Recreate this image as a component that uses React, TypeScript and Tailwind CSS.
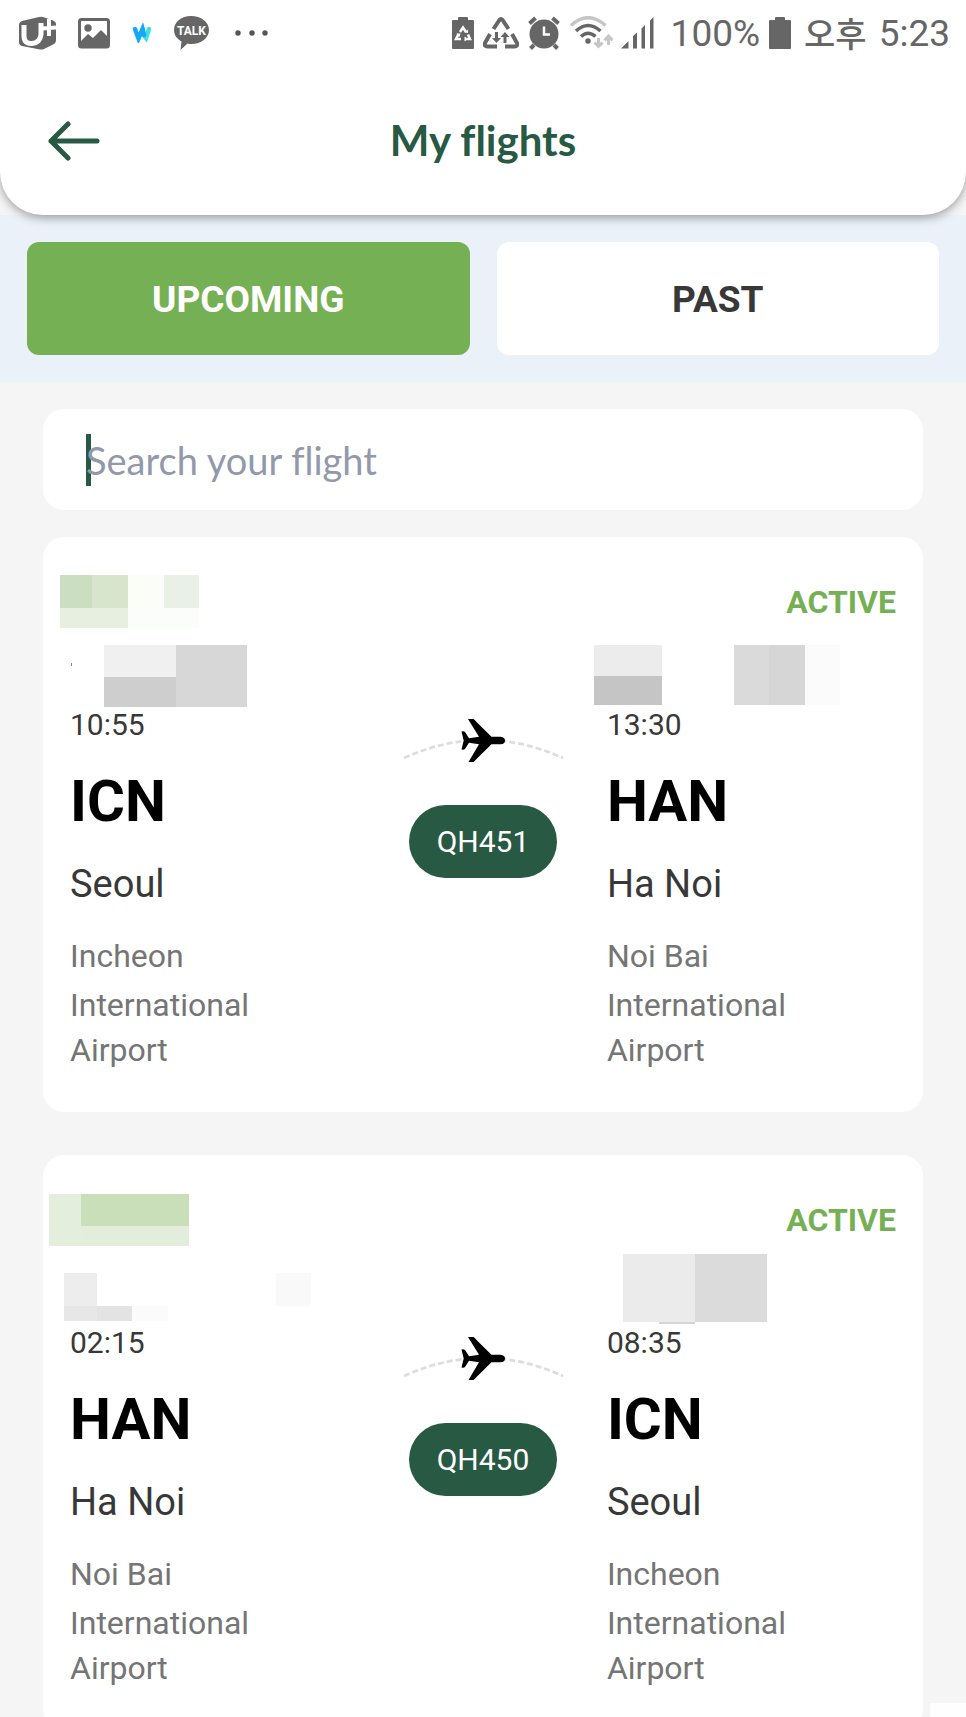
import { useState } from 'react'

type Block = { x: number; y: number; w: number; h: number; fill: string }

type Stop = {
  time: string
  code: string
  city: string
  airport: string
  date: Block[]
}

type Flight = {
  number: string
  status: string
  reference: Block[]
  from: Stop
  to: Stop
}

const FLIGHTS: Flight[] = [
  {
    number: 'QH451',
    status: 'ACTIVE',
    reference: [
      { x: -10, y: -8, w: 32, h: 33, fill: '#cbdfc0' },
      { x: 22, y: -8, w: 36, h: 33, fill: '#d7e5cd' },
      { x: 58, y: -8, w: 36, h: 33, fill: '#fafdf8' },
      { x: 94, y: -8, w: 35, h: 33, fill: '#e9f1e6' },
      { x: -10, y: 25, w: 68, h: 20, fill: '#e6efe0' },
      { x: 58, y: 25, w: 71, h: 20, fill: '#fbfdfa' },
    ],
    from: {
      time: '10:55',
      code: 'ICN',
      city: 'Seoul',
      airport: 'Incheon International Airport',
      date: [
        { x: 1, y: 40, w: 1, h: 3, fill: '#808080' },
        { x: 34, y: 22, w: 72, h: 32, fill: '#f0f0f0' },
        { x: 34, y: 54, w: 72, h: 30, fill: '#cecece' },
        { x: 106, y: 22, w: 71, h: 62, fill: '#d7d7d7' },
      ],
    },
    to: {
      time: '13:30',
      code: 'HAN',
      city: 'Ha Noi',
      airport: 'Noi Bai International Airport',
      date: [
        { x: -13, y: 22, w: 68, h: 31, fill: '#ececec' },
        { x: -13, y: 53, w: 68, h: 29, fill: '#c5c5c5' },
        { x: 127, y: 22, w: 35, h: 60, fill: '#dadada' },
        { x: 162, y: 22, w: 36, h: 60, fill: '#d6d6d6' },
        { x: 198, y: 22, w: 35, h: 60, fill: '#fbfbfb' },
      ],
    },
  },
  {
    number: 'QH450',
    status: 'ACTIVE',
    reference: [
      { x: -21, y: -7, w: 32, h: 52, fill: '#e3eedd' },
      { x: 11, y: -7, w: 108, h: 32, fill: '#c8dfba' },
      { x: 11, y: 25, w: 108, h: 20, fill: '#e2eddb' },
    ],
    from: {
      time: '02:15',
      code: 'HAN',
      city: 'Ha Noi',
      airport: 'Noi Bai International Airport',
      date: [
        { x: -6, y: 32, w: 33, h: 33, fill: '#ededed' },
        { x: -6, y: 65, w: 33, h: 15, fill: '#e7e7e7' },
        { x: 27, y: 65, w: 35, h: 15, fill: '#e3e3e3' },
        { x: 62, y: 65, w: 36, h: 15, fill: '#fbfbfb' },
        { x: 206, y: 32, w: 35, h: 33, fill: '#f9f9f9' },
      ],
    },
    to: {
      time: '08:35',
      code: 'ICN',
      city: 'Seoul',
      airport: 'Incheon International Airport',
      date: [
        { x: 16, y: 13, w: 72, h: 68, fill: '#ebebeb' },
        { x: 88, y: 13, w: 72, h: 68, fill: '#dbdbdb' },
        { x: 52, y: 81, w: 36, h: 2, fill: '#d5d5d5' },
      ],
    },
  },
]

// Pixelated blocks that cover personal details
const Mosaic = ({ blocks }: { blocks: Block[] }) => (
  <svg className="absolute top-0 left-0 h-px w-px overflow-visible" shapeRendering="crispEdges" aria-hidden="true">
    {blocks.map((b) => (
      <rect key={`${b.x}-${b.y}`} x={b.x} y={b.y} width={b.w} height={b.h} fill={b.fill} />
    ))}
  </svg>
)

const StatusBar = () => (
  <div className="flex h-[66px] items-center justify-between pl-[18px] pr-4 text-[#666666]">
    <div className="flex items-center gap-5">
      <svg width="40" height="34" viewBox="0 0 40 34" fill="currentColor">
        <path d="M4 5 21 1q2-.4 4 0l10 3.500q3 1 3 4V24q0 3-3 4.500L26 33q-2 .8-4 .4L4 30q-3-1-3-4V9q0-3 3-4Z" />
        <path d="M6 9v11q0 8 8 7.500 8-.6 9-9V7" fill="none" stroke="#fff" strokeWidth="5" />
        <path d="M31 3v17M24 12.500l14-1" fill="none" stroke="#fff" strokeWidth="4" />
      </svg>
      <svg width="32" height="32" viewBox="0 0 32 32">
        <rect x="1.500" y="2.500" width="29" height="27.500" rx="2" fill="none" stroke="currentColor" strokeWidth="3" />
        <circle cx="10" cy="11" r="3.700" fill="currentColor" />
        <path d="M2 25 10 17l5 4 8-8 8 8v8H2Z" fill="currentColor" />
      </svg>
      <svg width="24" height="20" viewBox="0 0 24 20" fill="none" strokeWidth="4.500" strokeLinecap="round">
        <path d="M13 6v5l3 4L19 6" stroke="#3fe0e0" />
        <path d="M5 6l3.500 9.500L12.500 6l1.500 6" stroke="#17a8f5" />
      </svg>
      <svg width="36" height="36" viewBox="0 0 36 36">
        <path
          d="M17 1C7.500 1 0 7 0 15c0 5 3 9 7.500 11.500L6.500 35l7-6.500q2 .5 4 .5c9.500 0 17.500-6 17.500-14S27 1 17 1Z"
          fill="currentColor"
        />
        <text x="17.500" y="20" textAnchor="middle" fill="#fff" className="font-['Roboto',sans-serif] text-[12px] font-bold">
          TALK
        </text>
      </svg>
      <svg width="40" height="8" viewBox="0 0 40 8" fill="#555">
        <circle cx="8" cy="4" r="2.700" />
        <circle cx="22" cy="4" r="2.700" />
        <circle cx="35" cy="4" r="2.700" />
      </svg>
    </div>
    <div className="flex items-center gap-2">
      <svg width="24" height="34" viewBox="0 0 24 34">
        <path d="M1 5q0-1 1-1h5V2q0-1 1-1h8q1 0 1 1v2h5q1 0 1 1v27q0 1-1 1H2q-1 0-1-1Z" fill="currentColor" />
        <g fill="none" stroke="#fff" strokeWidth="2.500">
          <path d="m9 16 3-4.500 3 4.500M17 18.500l2 4.500h-5M10 23H5l2.500-5" />
        </g>
        <path d="m13.500 20.500 3 2.500-3 2.500ZM5.500 17.500h4l-1 3.500ZM13.500 16.500l3.500.5v-3.500Z" fill="#fff" />
      </svg>
      <svg width="36" height="34" viewBox="0 0 36 34">
        <g fill="none" stroke="currentColor" strokeWidth="4">
          <path d="m10.500 13 6-9q1.500-2 3 0l6 9M29 18l5 9q1 3.500-2.500 3.500H22M14 30.500H4.500Q1 30.500 2 27l5-9" />
        </g>
        <path d="M12 16h3v6h3l-4.500 5L9 22h3ZM20.500 27v-6h-3l4.500-5 4.500 5h-3v6Z" fill="currentColor" />
      </svg>
      <svg width="34" height="34" viewBox="0 0 34 34">
        <circle cx="17" cy="18" r="14.500" fill="currentColor" />
        <path d="m2.500 7.500 6-5.500M31.500 7.500l-6-5.500M7 29l-3.500 3.500M27 29l3.500 3.500" stroke="currentColor" strokeWidth="4" />
        <path d="M17 10.500v8h6" fill="none" stroke="#fff" strokeWidth="2.500" />
      </svg>
      <svg width="44" height="34" viewBox="0 0 44 34" fill="none" strokeWidth="3.500">
        <path d="M2 9.500q17-15.500 34.500 0" stroke="#c6c6c6" />
        <path d="M7 15q12-11 24.500 0M12 20.500q7-6.500 14.500 0" stroke="currentColor" />
        <circle cx="19" cy="25" r="2.700" fill="currentColor" />
        <path d="M29.500 22v8.500m-4-4 4 4 4-4M39.500 29v-9m-4 4.500 4-4.500 4 4.500" stroke="#c6c6c6" strokeWidth="3" />
      </svg>
      <svg width="34" height="34" viewBox="0 0 34 34" fill="currentColor">
        <path d="M0 32.500 7.500 25v7.500ZM12 20l4-3.500v16h-4ZM20.500 12.500l3.500-3.500v23.500h-3.500ZM29 4.500 32.500 1v31.500H29Z" />
      </svg>
      <span className="pl-2 font-['Roboto',sans-serif] text-[37px] leading-none">100%</span>
      <svg width="24" height="34" viewBox="0 0 24 34" fill="currentColor">
        <path d="M1 5q0-1 1-1h5V2q0-1 1-1h8q1 0 1 1v2h5q1 0 1 1v27q0 1-1 1H2q-1 0-1-1Z" />
      </svg>
      <span className="pl-1 font-['Noto_Sans_CJK_KR',sans-serif] text-[34px] leading-none font-medium">오후</span>
      <span className="pl-1 font-['Roboto',sans-serif] text-[37px] leading-none">5:23</span>
    </div>
  </div>
)

const Header = () => (
  <header className="relative z-10 shrink-0 rounded-b-[43px] bg-white shadow-[0_3px_10px_rgba(0,0,0,0.35)]">
    <StatusBar />
    <div className="grid h-[149px] grid-cols-[1fr_auto_1fr] items-center px-12">
      <button type="button" aria-label="Back" className="justify-self-start">
        <svg width="52" height="40" viewBox="0 0 52 40" fill="none" stroke="#285943" strokeWidth="5" strokeLinecap="round" strokeLinejoin="round">
          <path d="M49 20H3M20 3 3 20l17 17" />
        </svg>
      </button>
      <h1 className="font-['Lato',sans-serif] text-[42px] font-bold text-[#285943] [font-variant-ligatures:none]">
        My flights
      </h1>
    </div>
  </header>
)

const FlightPath = () => (
  <svg width="162" height="44" viewBox="0 0 162 44" aria-hidden="true">
    <path d="M2 39Q81.500 3 161 39" fill="none" stroke="#dedcdc" strokeWidth="2.800" strokeDasharray="6 3" />
    <path d="M66 0h5.500q1.500 1 3 3l15 14.700h9q4.500.4 4.500 3.800t-4.500 3.800h-9L74.500 40q-1.500 2-3 3H66.500L77 25.300l-10-1.500-4 6.200q-1 1-3.500.5l2.200-9-2.200-9q2.500-.5 3.500.5l4 6.200 10-1.500Z" />
  </svg>
)

const StopInfo = ({ stop }: { stop: Stop }) => (
  <div className="relative pt-[82px]">
    <Mosaic blocks={stop.date} />
    <time className="block text-[30px] leading-[40px] text-[#383838]">{stop.time}</time>
    <h2 className="mt-6 text-[58px] leading-[64px] font-bold text-black">{stop.code}</h2>
    <p className="mt-[27px] text-[38px] leading-[48px] text-[#383838]">{stop.city}</p>
    <p className="mt-[22px] max-w-[220px] text-[32px] leading-[45px] text-[#757575] first-line:leading-[53px]">
      {stop.airport}
    </p>
  </div>
)

const FlightCard = ({ flight }: { flight: Flight }) => (
  <article className="rounded-[21px] bg-white px-[27px] pt-[46px] pb-[39px]">
    <div className="relative mb-[2px] flex justify-end">
      <Mosaic blocks={flight.reference} />
      <span className="text-[32px] leading-[38px] font-bold text-[#76b054]">{flight.status}</span>
    </div>
    <div className="grid grid-cols-[7fr_6fr_7fr]">
      <StopInfo stop={flight.from} />
      <div className="flex flex-col items-center gap-[42px] pt-24">
        <FlightPath />
        <span className="flex h-[73px] w-[148px] items-center justify-center rounded-full bg-[#285943] text-[30px] text-white">
          {flight.number}
        </span>
      </div>
      <StopInfo stop={flight.to} />
    </div>
  </article>
)

const TABS = ['UPCOMING', 'PAST']

export default function App() {
  const [tab, setTab] = useState('UPCOMING')
  const [query, setQuery] = useState('')

  return (
    <div className="relative flex h-screen flex-col overflow-hidden bg-[#f5f5f5] font-['Roboto',sans-serif]">
      <Header />
      <nav className="grid shrink-0 grid-cols-2 gap-[27px] bg-[#eaf1f8] px-[27px] pt-[27px] pb-[27px]">
        {TABS.map((name) => (
          <button
            key={name}
            type="button"
            onClick={() => setTab(name)}
            className={`h-[113px] rounded-xl pt-[2px] text-[37px] font-bold ${
              tab === name ? 'bg-[#76b054] text-white' : 'bg-white text-[#383838]'
            }`}
          >
            {name}
          </button>
        ))}
      </nav>
      <main className="min-h-0 flex-1 overflow-hidden px-[43px] pt-[27px]">
        <div className="relative flex h-[101px] items-center rounded-[21px] bg-white">
          <span className="absolute left-[43px] h-[52px] w-[5px] bg-[#285943]" />
          <input
            type="text"
            aria-label="Search your flight"
            placeholder="Search your flight"
            value={query}
            onChange={(e) => setQuery(e.target.value)}
            className="relative h-full w-full bg-transparent px-[43px] font-['Lato',sans-serif] text-[38px] text-[#383838] outline-none [font-variant-ligatures:none] placeholder:text-[#9199aa]"
          />
        </div>
        <div className="mt-[27px] flex flex-col gap-[43px]">
          {FLIGHTS.map((flight) => (
            <FlightCard key={flight.number} flight={flight} />
          ))}
        </div>
      </main>
      <div className="absolute right-0 bottom-0 h-[14px] w-9 bg-[#fefefe]" />
    </div>
  )
}
